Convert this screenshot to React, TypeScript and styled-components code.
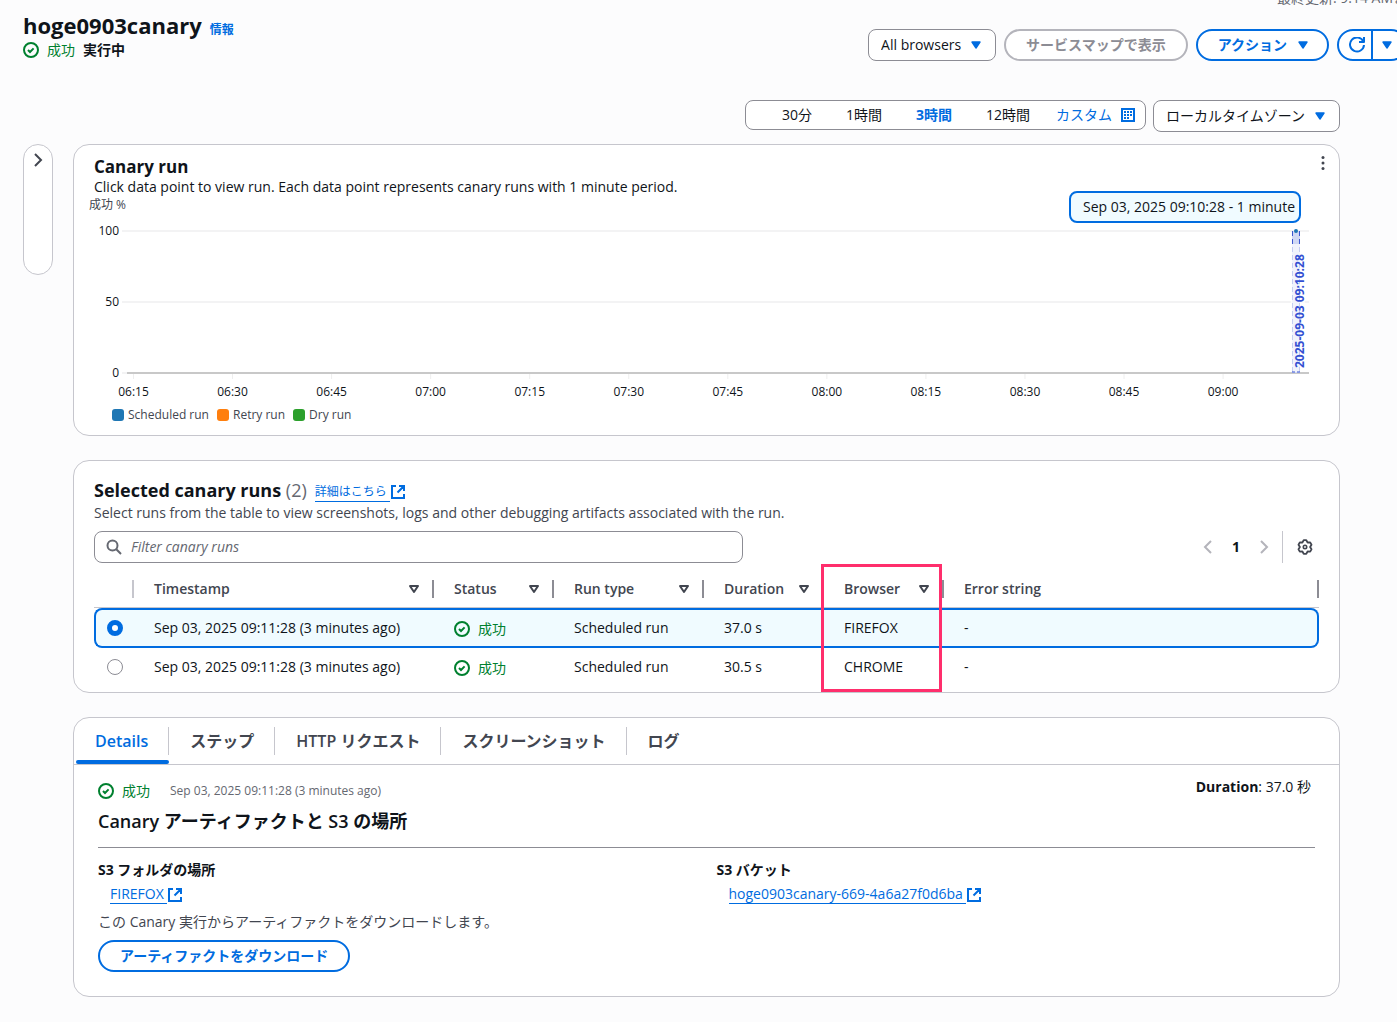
import React, { useState } from "react";
import styled, { createGlobalStyle, css } from "styled-components";

const color = {
  page: "#fcfcfd",
  surface: "#ffffff",
  text: "#0f141a",
  heading: "#424650",
  muted: "#656871",
  blue: "#006ce0",
  green: "#00802f",
  line: "#c6c6cd",
  control: "#8c8c94",
  disabled: "#b4b4bb",
  selected: "#f0fbff",
  pink: "#ff2e6c",
};

const GlobalStyle = createGlobalStyle`
  *, *::before, *::after { box-sizing: border-box; }
  body {
    margin: 0;
    background: ${color.page};
    color: ${color.text};
    font: 400 14px/20px "Open Sans", "Noto Sans CJK JP", sans-serif;
  }
  button, input, select { font: inherit; color: inherit; }
  h1, h2, h3, p, dl, dd { margin: 0; }
`;

/* ---------- icons ---------- */

const IconSvg = styled.svg`
  display: block;
  flex: none;
  width: 16px;
  height: 16px;
  fill: none;
  stroke: currentColor;
  stroke-width: 2;
`;

const SuccessIcon = () => (
  <IconSvg viewBox="0 0 16 16" aria-hidden="true">
    <circle cx="8" cy="8" r="7" />
    <path d="m5 8 2 2 3.6-3.6" />
  </IconSvg>
);
const CaretFilled = () => (
  <IconSvg viewBox="0 0 16 16" aria-hidden="true">
    <path d="M4 5h8l-4 6-4-6z" fill="currentColor" strokeWidth="1.4" strokeLinejoin="round" />
  </IconSvg>
);
const CaretOutline = () => (
  <IconSvg viewBox="0 0 16 16" aria-hidden="true">
    <path d="M4 5h8l-4 6-4-6z" strokeLinejoin="round" />
  </IconSvg>
);
const RefreshIcon = () => (
  <IconSvg viewBox="0 0 16 16" aria-hidden="true">
    <path d="M10 5h5V0M15 8a7 7 0 1 1-.7-3.6" strokeLinejoin="round" />
  </IconSvg>
);
const CalendarIcon = () => (
  <IconSvg viewBox="0 0 16 16" aria-hidden="true">
    <path d="M2 2h12v12H2z" />
    <path d="M4 5h2M7 5h2M10 5h2M4 8h2M7 8h2M10 8h2M4 11h2M7 11h2" />
  </IconSvg>
);
const ExternalIcon = () => (
  <IconSvg viewBox="0 0 16 16" aria-hidden="true">
    <path d="M6 2H2v12h12v-4M9 2h5v5M14 2 7.5 8.5" />
  </IconSvg>
);
const SearchIcon = () => (
  <IconSvg viewBox="0 0 16 16" aria-hidden="true">
    <circle cx="6.5" cy="6.5" r="5" />
    <path d="m10.3 10.3 4.7 4.7" />
  </IconSvg>
);
const ChevronIcon = ({ left }: { left?: boolean }) => (
  <IconSvg viewBox="0 0 16 16" aria-hidden="true">
    <path d={left ? "M11 2 5 8l6 6" : "m5 2 6 6-6 6"} />
  </IconSvg>
);
const DotsIcon = () => (
  <IconSvg viewBox="0 0 16 16" aria-hidden="true">
    <g fill="currentColor" stroke="none">
      <circle cx="8" cy="2.4" r="1.5" />
      <circle cx="8" cy="8" r="1.5" />
      <circle cx="8" cy="13.6" r="1.5" />
    </g>
  </IconSvg>
);
const GearIcon = () => (
  <IconSvg viewBox="0 0 16 16" aria-hidden="true">
    <path
      strokeWidth="1.8"
      strokeLinejoin="round"
      d="M6.7 1.2h2.6l1.3 2.3 2.6-.1 1.3 2.3L13.1 8l1.4 2.3-1.3 2.3-2.6-.1-1.3 2.3H6.7l-1.3-2.3-2.6.1-1.3-2.3L2.9 8 1.5 5.7l1.3-2.3 2.6.1z"
    />
    <circle cx="8" cy="8" r="1.7" strokeWidth="1.6" />
  </IconSvg>
);

/* ---------- shared parts ---------- */

const Status = styled.span`
  display: inline-flex;
  align-items: center;
  gap: 8px;
  color: ${color.green};
  vertical-align: middle;
`;

const Success = () => (
  <Status>
    <SuccessIcon />
    成功
  </Status>
);

const IconButton = styled.button<{ $faded?: boolean }>`
  display: inline-flex;
  align-items: center;
  justify-content: center;
  width: 16px;
  height: 16px;
  padding: 0;
  border: 0;
  background: none;
  color: ${(p) => (p.$faded ? color.disabled : color.heading)};
`;

const PillButton = styled.button<{ $caret?: boolean }>`
  display: inline-flex;
  align-items: center;
  gap: 8px;
  height: 32px;
  padding: 0 ${(p) => (p.$caret ? 16 : 20)}px 0 20px;
  border: 2px solid ${color.blue};
  border-radius: 16px;
  background: ${color.surface};
  color: ${color.blue};
  font-weight: 700;
  white-space: nowrap;

  &:disabled {
    border-color: ${color.disabled};
    color: ${color.control};
  }
`;

const SelectBox = styled.label`
  display: grid;
  align-items: center;
  color: ${color.blue};

  > * {
    grid-area: 1 / 1;
  }
  > svg {
    justify-self: end;
    margin-right: 12px;
    pointer-events: none;
  }
`;

const NativeSelect = styled.select`
  appearance: none;
  height: 32px;
  padding: 0 33px 0 12px;
  border: 1px solid ${color.control};
  border-radius: 8px;
  background: ${color.surface};
  color: ${color.text};
`;

const Select = ({ label, value }: { label: string; value: string }) => (
  <SelectBox>
    <NativeSelect aria-label={label}>
      <option>{value}</option>
    </NativeSelect>
    <CaretFilled />
  </SelectBox>
);

const Anchor = styled.a<{ $small?: boolean }>`
  display: inline-flex;
  align-items: center;
  color: ${color.blue};
  font-size: ${(p) => (p.$small ? 12 : 14)}px;
  font-weight: 400;
  line-height: 20px;
  text-decoration: none;
`;

const AnchorText = styled.span`
  padding-right: 3px;
  border-bottom: 1px solid ${color.blue};
  line-height: 18px;
`;

const ExternalLink = ({ children, small }: { children: string; small?: boolean }) => (
  <Anchor href="#" $small={small}>
    <AnchorText>{children}</AnchorText>
    <ExternalIcon />
  </Anchor>
);

const Card = styled.section`
  border: 1px solid ${color.line};
  border-radius: 16px;
  background: ${color.surface};
`;

/* ---------- page header ---------- */

const Page = styled.div`
  min-height: 100vh;
  overflow: hidden;
  padding-bottom: 24px;
`;

const Header = styled.header`
  display: flex;
  justify-content: space-between;
  align-items: flex-start;
  padding-left: 23px;
`;

const TitleBlock = styled.div`
  padding-top: 10px;
`;

const TitleRow = styled.div`
  display: flex;
  align-items: baseline;
  gap: 8px;
`;

const PageTitle = styled.h1`
  font-size: 22px;
  line-height: 30px;
  font-weight: 700;
`;

const InfoLink = styled.a`
  color: ${color.blue};
  font-size: 12px;
  font-weight: 700;
  text-decoration: none;
`;

const StateRow = styled.div`
  display: flex;
  align-items: center;
  gap: 8px;
`;

const HeaderSide = styled.div`
  display: flex;
  flex-direction: column;
  align-items: flex-end;
  gap: 21px;
  margin: -12px -10px 0 0;
`;

const LastUpdated = styled.p`
  color: ${color.muted};
  white-space: nowrap;
`;

const Actions = styled.div`
  display: flex;
  gap: 8px;
`;

const SplitButton = styled.div`
  display: flex;
  height: 32px;
  border: 2px solid ${color.blue};
  border-radius: 16px;
  background: ${color.surface};
`;

const SplitPart = styled.button<{ $second?: boolean }>`
  display: flex;
  align-items: center;
  justify-content: center;
  width: ${(p) => (p.$second ? 34 : 32)}px;
  padding: 0 0 0 ${(p) => (p.$second ? 0 : 4)}px;
  border: 0;
  border-left: ${(p) => (p.$second ? `2px solid ${color.blue}` : "0")};
  background: none;
  color: ${color.blue};
  ${(p) => p.$second && css`padding-right: 4px;`}
`;

/* ---------- time range ---------- */

const RangeRow = styled.div`
  display: flex;
  justify-content: flex-end;
  align-items: flex-start;
  gap: 7px;
  margin-top: 39px;
  padding-right: 57px;
`;

const RangeGroup = styled.div`
  display: flex;
  height: 30px;
  padding-left: 19px;
  border: 1px solid ${color.control};
  border-radius: 8px;
  background: ${color.surface};
`;

const RangeButton = styled.button<{ $active?: boolean; $custom?: boolean }>`
  display: flex;
  align-items: center;
  gap: 8px;
  padding: 0 ${(p) => (p.$custom ? 9 : 17)}px;
  border: 0;
  background: none;
  color: ${(p) => (p.$active || p.$custom ? color.blue : color.text)};
  font-weight: ${(p) => (p.$active ? 700 : 400)};
  white-space: nowrap;
`;

/* ---------- body ---------- */

const Body = styled.div`
  display: flex;
  align-items: flex-start;
  gap: 20px;
  margin-top: 12px;
  padding: 0 57px 0 23px;
`;

const SidePanel = styled.aside`
  flex: none;
  display: flex;
  justify-content: center;
  width: 30px;
  height: 131px;
  padding-top: 7px;
  border: 1px solid ${color.line};
  border-radius: 16px;
  background: ${color.surface};
`;

const Main = styled.main`
  flex: 1;
  min-width: 0;
  display: grid;
  gap: 24px;
`;

/* ---------- chart ---------- */

const ChartCard = styled(Card)`
  position: relative;
  padding: 12px 0;
`;

const ChartHeader = styled.div`
  display: flex;
  justify-content: space-between;
  align-items: flex-start;
  padding: 0 8px 0 20px;

  > button {
    margin-top: -2px;
  }
`;

const ChartTitle = styled.h2`
  font-size: 17px;
  line-height: 20px;
  font-weight: 700;
`;

const ChartBody = styled.div`
  padding: 0 30px 0 15px;
`;

const AxisTitle = styled.div`
  color: ${color.heading};
  font-size: 12px;
  line-height: 16px;
`;

const PlotArea = styled.div`
  padding-left: 38px;
`;

const Plot = styled.svg`
  display: block;
  width: 100%;
  height: 188px;
  overflow: visible;
  font-size: 12px;
  font-weight: 500;
  fill: ${color.text};
`;

const Legend = styled.ul`
  display: flex;
  gap: 8px;
  margin: 6px 0 0;
  padding: 0 0 0 23px;
  list-style: none;
  color: ${color.heading};
  font-size: 12px;
  line-height: 16px;
`;

const LegendItem = styled.li<{ $color: string }>`
  display: flex;
  align-items: center;
  gap: 4px;

  &::before {
    content: "";
    width: 12px;
    height: 12px;
    border-radius: 3px;
    background: ${(p) => p.$color};
  }
`;

const PointLabel = styled.div`
  position: absolute;
  top: 46px;
  right: 38px;
  height: 32px;
  padding: 0 4px 0 12px;
  border: 2px solid ${color.blue};
  border-radius: 8px;
  background: ${color.selected};
  line-height: 28px;
  white-space: nowrap;
`;

const times = ["06:15", "06:30", "06:45", "07:00", "07:15", "07:30", "07:45", "08:00", "08:15", "08:30", "08:45", "09:00"];
const levels = [
  { label: "100", y: 18 },
  { label: "50", y: 89 },
  { label: "0", y: 160 },
];

const RunChart = () => (
  <Plot role="img" aria-label="Canary run">
    {levels.map((l) => (
      <g key={l.label}>
        <line x1="-5" x2="100%" y1={l.y} y2={l.y} stroke="#f3f3f4" strokeWidth="2" />
        <text x="-8" y={l.y + 4} textAnchor="end">{l.label}</text>
      </g>
    ))}
    <line x1="0" x2="100%" y1="160" y2="160" stroke="#c8c8c8" strokeWidth="2" />
    {times.map((t, i) => {
      const x = `${0.55 + i * 8.38}%`;
      return (
        <g key={t}>
          <line x1={x} x2={x} y1="161" y2="166" stroke="#eeeeee" />
          <text x={x} y="183" textAnchor="middle">{t}</text>
        </g>
      );
    })}
    <svg x="98.9%" y="18" overflow="visible">
      <rect x="-4" width="8" height="142" fill="#d0d8f4" />
      <path d="M-3.5 0v142M3.5 0v142" stroke="#3b55d0" strokeDasharray="5 3" fill="none" />
      <rect x="-5" y="13" width="14" height="128" fill="#ffffff" opacity=".7" />
      <path d="M-4 141h3M1 141h3" stroke="#3b55d0" />
      <circle r="2" fill="#1f77b4" />
      <text transform="translate(8 137) rotate(-90)" fontSize="12" fontWeight="700" fill="#3350d2">
        2025-09-03 09:10:28
      </text>
    </svg>
  </Plot>
);

/* ---------- runs table ---------- */

const RunsCard = styled(Card)`
  padding: 16px 20px 6px;
`;

const RunsTitleRow = styled.div`
  display: flex;
  align-items: center;
  gap: 8px;

  > a {
    margin-top: 4px;
  }
`;

const RunsTitle = styled.h2`
  font-size: 18px;
  line-height: 26px;
  font-weight: 700;

  > span {
    color: ${color.muted};
    font-weight: 400;
  }
`;

const Description = styled.p`
  color: ${color.heading};
`;

const Toolbar = styled.div`
  display: flex;
  justify-content: space-between;
  align-items: center;
  margin: 8px 0;
`;

const FilterBox = styled.label`
  display: flex;
  align-items: center;
  gap: 9px;
  width: 53%;
  height: 32px;
  padding: 0 11px;
  border: 1px solid ${color.control};
  border-radius: 8px;
  color: ${color.muted};
`;

const FilterInput = styled.input`
  flex: 1;
  min-width: 0;
  padding: 0;
  border: 0;
  outline: 0;
  background: none;
  color: ${color.text};

  &::placeholder {
    color: ${color.muted};
    font-style: italic;
    opacity: 1;
  }
`;

const Pager = styled.nav`
  display: flex;
  align-items: center;
  gap: 16px;
  padding-right: 6px;
`;

const PageNumber = styled.button`
  width: 8px;
  padding: 0;
  border: 0;
  background: none;
  font-weight: 700;
`;

const PagerSettings = styled.div`
  display: flex;
  align-items: center;
  height: 32px;
  margin-left: -6px;
  padding-left: 14px;
  border-left: 1px solid ${color.line};
`;

const TableWrap = styled.div`
  position: relative;
`;

const Table = styled.table`
  width: 100%;
  table-layout: fixed;
  border-collapse: separate;
  border-spacing: 0;
`;

const Col = styled.col<{ $width?: number }>`
  width: ${(p) => (p.$width ? `${p.$width}px` : "auto")};
`;

const HeadCell = styled.th<{ $first?: boolean }>`
  height: 37px;
  padding: 0;
  border-bottom: 1px solid ${color.line};
  color: ${color.heading};
  font-weight: 600;
  text-align: left;

  > div {
    display: flex;
    align-items: center;
    justify-content: space-between;
    height: 18px;
    padding: 0 10px 0 20px;
    border-right: 2px solid ${(p) => (p.$first ? color.line : color.control)};
  }
`;

const Cell = styled.td`
  padding: 0 20px;
  white-space: nowrap;

  &:first-child {
    padding: 0 0 0 11px;
  }
`;

const Row = styled.tr<{ $selected: boolean }>`
  height: ${(p) => (p.$selected ? 40 : 38)}px;

  > td {
    border: 0 solid ${(p) => (p.$selected ? color.blue : "transparent")};
    border-width: ${(p) => (p.$selected ? "2px 0" : "0")};
    background: ${(p) => (p.$selected ? color.selected : "none")};
  }
  > td:first-child {
    border-left-width: 2px;
    border-radius: 8px 0 0 8px;
  }
  > td:last-child {
    border-right-width: 2px;
    border-radius: 0 8px 8px 0;
  }
`;

const Radio = styled.input`
  appearance: none;
  display: block;
  width: 16px;
  height: 16px;
  margin: 0;
  border: 1px solid ${color.control};
  border-radius: 50%;
  background: ${color.surface};

  &:checked {
    border: 5px solid ${color.blue};
  }
`;

const Highlight = styled.div`
  position: absolute;
  top: -7px;
  left: 727px;
  width: 121px;
  height: 128px;
  border: 3px solid ${color.pink};
  pointer-events: none;
`;

const columns: { label: string; width?: number; sortable?: boolean }[] = [
  { label: "Timestamp", width: 300, sortable: true },
  { label: "Status", width: 120, sortable: true },
  { label: "Run type", width: 150, sortable: true },
  { label: "Duration", width: 120, sortable: true },
  { label: "Browser", width: 120, sortable: true },
  { label: "Error string" },
];
const runs = [
  { time: "Sep 03, 2025 09:11:28 (3 minutes ago)", type: "Scheduled run", duration: "37.0 s", browser: "FIREFOX", error: "-" },
  { time: "Sep 03, 2025 09:11:28 (3 minutes ago)", type: "Scheduled run", duration: "30.5 s", browser: "CHROME", error: "-" },
];

/* ---------- details ---------- */

const TabList = styled.div`
  display: flex;
  height: 47px;
  border-bottom: 1px solid ${color.line};
`;

const Tab = styled.button<{ $active: boolean }>`
  position: relative;
  padding: 0 21px;
  border: 0;
  background: none;
  color: ${(p) => (p.$active ? color.blue : color.heading)};
  font-size: 16px;
  font-weight: 600;
  white-space: nowrap;

  &:not(:last-child)::before {
    content: "";
    position: absolute;
    top: 9px;
    right: 0;
    width: 1px;
    height: 28px;
    background: ${color.line};
  }
  &::after {
    content: "";
    display: ${(p) => (p.$active ? "block" : "none")};
    position: absolute;
    right: 0;
    bottom: 0;
    left: 2px;
    height: 4px;
    border-radius: 2px;
    background: ${color.blue};
  }
`;

const TabPanel = styled.div`
  padding: 12px 24px 24px;
`;

const PanelTop = styled.div`
  display: flex;
  justify-content: space-between;
  align-items: flex-start;
  padding-right: 4px;
`;

const RunMeta = styled.div`
  display: flex;
  align-items: center;
  gap: 20px;
  padding-top: 4px;
`;

const RunTime = styled.span`
  color: ${color.muted};
  font-size: 12px;
`;

const PanelTitle = styled.h3`
  margin-top: 8px;
  font-size: 18px;
  line-height: 24px;
  font-weight: 600;
`;

const Divider = styled.hr`
  margin: 14px 0 12px;
  border: 0;
  border-top: 1px solid ${color.control};
`;

const Locations = styled.dl`
  display: grid;
  grid-template-columns: 1fr 1fr;
  column-gap: 20px;

  dt {
    font-weight: 700;
  }
  dd {
    margin-top: 4px;
    padding-left: 12px;
  }
`;

const DownloadNote = styled.p`
  margin: 8px 0;
  color: ${color.heading};
`;

const tabs = ["Details", "ステップ", "HTTP リクエスト", "スクリーンショット", "ログ"];

export default function App() {
  const [selected, setSelected] = useState(0);
  const [tab, setTab] = useState(0);

  return (
    <Page>
      <GlobalStyle />
      <Header>
        <TitleBlock>
          <TitleRow>
            <PageTitle>hoge0903canary</PageTitle>
            <InfoLink href="#">情報</InfoLink>
          </TitleRow>
          <StateRow>
            <Success />
            <strong>実行中</strong>
          </StateRow>
        </TitleBlock>
        <HeaderSide>
          <LastUpdated>最終更新: 9:14 AMま</LastUpdated>
          <Actions>
            <Select label="Browsers" value="All browsers" />
            <PillButton disabled>サービスマップで表示</PillButton>
            <PillButton $caret>
              アクション
              <CaretFilled />
            </PillButton>
            <SplitButton>
              <SplitPart aria-label="Refresh"><RefreshIcon /></SplitPart>
              <SplitPart $second aria-label="Refresh options"><CaretFilled /></SplitPart>
            </SplitButton>
          </Actions>
        </HeaderSide>
      </Header>

      <RangeRow>
        <RangeGroup>
          <RangeButton>30分</RangeButton>
          <RangeButton>1時間</RangeButton>
          <RangeButton $active>3時間</RangeButton>
          <RangeButton>12時間</RangeButton>
          <RangeButton $custom>
            カスタム
            <CalendarIcon />
          </RangeButton>
        </RangeGroup>
        <Select label="Time zone" value="ローカルタイムゾーン" />
      </RangeRow>

      <Body>
        <SidePanel>
          <IconButton aria-label="Open panel"><ChevronIcon /></IconButton>
        </SidePanel>
        <Main>
          <ChartCard>
            <ChartHeader>
              <div>
                <ChartTitle>Canary run</ChartTitle>
                <p>Click data point to view run. Each data point represents canary runs with 1 minute period.</p>
              </div>
              <IconButton aria-label="Chart menu"><DotsIcon /></IconButton>
            </ChartHeader>
            <ChartBody>
              <AxisTitle>成功 %</AxisTitle>
              <PlotArea><RunChart /></PlotArea>
              <Legend>
                <LegendItem $color="#1f77b4">Scheduled run</LegendItem>
                <LegendItem $color="#ff7f0e">Retry run</LegendItem>
                <LegendItem $color="#2ca02c">Dry run</LegendItem>
              </Legend>
            </ChartBody>
            <PointLabel>Sep 03, 2025 09:10:28 - 1 minute</PointLabel>
          </ChartCard>

          <RunsCard>
            <RunsTitleRow>
              <RunsTitle>Selected canary runs <span>(2)</span></RunsTitle>
              <ExternalLink small>詳細はこちら</ExternalLink>
            </RunsTitleRow>
            <Description>
              Select runs from the table to view screenshots, logs and other debugging artifacts associated with the run.
            </Description>
            <Toolbar>
              <FilterBox>
                <SearchIcon />
                <FilterInput type="text" placeholder="Filter canary runs" aria-label="Filter canary runs" />
              </FilterBox>
              <Pager aria-label="Pages">
                <IconButton $faded aria-label="Previous page"><ChevronIcon left /></IconButton>
                <PageNumber>1</PageNumber>
                <IconButton $faded aria-label="Next page"><ChevronIcon /></IconButton>
                <PagerSettings>
                  <IconButton aria-label="Settings"><GearIcon /></IconButton>
                </PagerSettings>
              </Pager>
            </Toolbar>
            <TableWrap>
              <Table>
                <colgroup>
                  <Col $width={40} />
                  {columns.map((c) => <Col key={c.label} $width={c.width} />)}
                </colgroup>
                <thead>
                  <tr>
                    <HeadCell $first><div /></HeadCell>
                    {columns.map((c) => (
                      <HeadCell key={c.label} scope="col">
                        <div>
                          {c.label}
                          {c.sortable && <CaretOutline />}
                        </div>
                      </HeadCell>
                    ))}
                  </tr>
                </thead>
                <tbody>
                  {runs.map((run, i) => (
                    <Row key={run.browser} $selected={i === selected}>
                      <Cell>
                        <Radio
                          type="radio"
                          name="run"
                          aria-label={run.browser}
                          checked={i === selected}
                          onChange={() => setSelected(i)}
                        />
                      </Cell>
                      <Cell>{run.time}</Cell>
                      <Cell><Success /></Cell>
                      <Cell>{run.type}</Cell>
                      <Cell>{run.duration}</Cell>
                      <Cell>{run.browser}</Cell>
                      <Cell>{run.error}</Cell>
                    </Row>
                  ))}
                </tbody>
              </Table>
              <Highlight />
            </TableWrap>
          </RunsCard>

          <Card>
            <TabList role="tablist">
              {tabs.map((t, i) => (
                <Tab key={t} role="tab" aria-selected={i === tab} $active={i === tab} onClick={() => setTab(i)}>
                  {t}
                </Tab>
              ))}
            </TabList>
            <TabPanel role="tabpanel">
              <PanelTop>
                <RunMeta>
                  <Success />
                  <RunTime>Sep 03, 2025 09:11:28 (3 minutes ago)</RunTime>
                </RunMeta>
                <p><strong>Duration</strong>: 37.0 秒</p>
              </PanelTop>
              <PanelTitle>Canary アーティファクトと S3 の場所</PanelTitle>
              <Divider />
              <Locations>
                <div>
                  <dt>S3 フォルダの場所</dt>
                  <dd><ExternalLink>FIREFOX</ExternalLink></dd>
                </div>
                <div>
                  <dt>S3 バケット</dt>
                  <dd><ExternalLink>hoge0903canary-669-4a6a27f0d6ba</ExternalLink></dd>
                </div>
              </Locations>
              <DownloadNote>この Canary 実行からアーティファクトをダウンロードします。</DownloadNote>
              <PillButton>アーティファクトをダウンロード</PillButton>
            </TabPanel>
          </Card>
        </Main>
      </Body>
    </Page>
  );
}
